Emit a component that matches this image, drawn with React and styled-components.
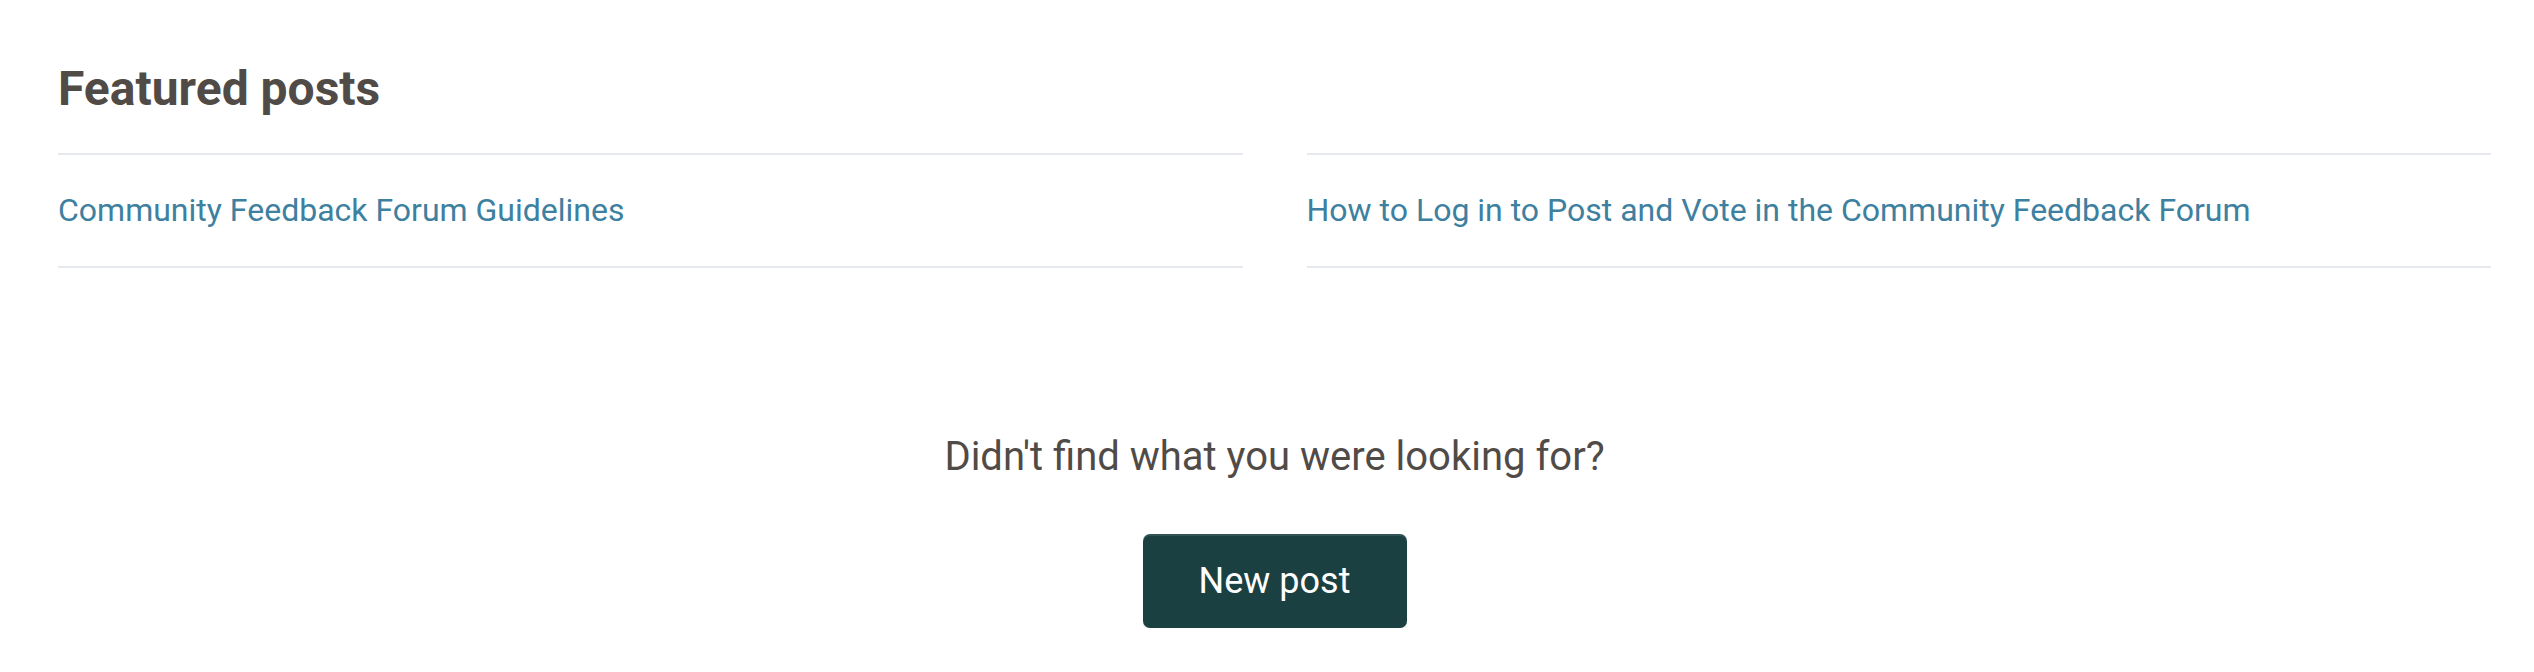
import React from 'react'
import styled, { createGlobalStyle } from 'styled-components'

const GlobalStyle = createGlobalStyle`
    body {
        margin: 0;
        background: #ffffff;
        font-family: Roboto, "Liberation Sans", sans-serif;
    }
`;

const featured = [
    'Community Feedback Forum Guidelines',
    'How to Log in to Post and Vote in the Community Feedback Forum',
];

function App() {
    return (
        <Page>
            <GlobalStyle />
            <Section>
                <Heading>Featured posts</Heading>
                <PostList>
                    {featured.map(title => (
                        <PostItem key={title}>
                            <a href="#">{title}</a>
                        </PostItem>
                    ))}
                </PostList>
            </Section>
            <Footer>
                <Question>Didn't find what you were looking for?</Question>
                <NewPostButton>New post</NewPostButton>
            </Footer>
        </Page>
    )
}

const Page = styled.div`
    padding: 0 43px 0 58px;
`;

const Section = styled.section`
    padding-top: 59px;
`;

const Heading = styled.h2`
    margin: 0 0 34px;
    font-size: 48px;
    line-height: 60px;
    font-weight: 700;
    color: #514b47;
`;

const PostList = styled.ul`
    list-style: none;
    margin: 0;
    padding: 0;
    display: grid;
    grid-template-columns: 1fr 1fr;
    column-gap: 64px;
`;

const PostItem = styled.li`
    border-top: 2px solid #e6e9ed;
    border-bottom: 2px solid #e6e9ed;
    padding: 32px 0;
    a {
        font-size: 32px;
        line-height: 47px;
        color: #3d80a0;
        text-decoration: none;
    }
`;

const Footer = styled.div`
    display: flex;
    flex-direction: column;
    align-items: center;
    padding-top: 160px;
`;

const Question = styled.p`
    margin: 0 0 48px;
    font-size: 40px;
    line-height: 58px;
    color: #514b47;
`;

const NewPostButton = styled.button`
    width: 264px;
    height: 94px;
    border: none;
    border-radius: 7px;
    background: #1b4042;
    color: #ffffff;
    font-family: Roboto, "Liberation Sans", sans-serif;
    font-size: 36px;
    cursor: pointer;
    box-shadow: inset 0 2px 0 rgba(255, 255, 255, 0.1), 0 3px 2px rgba(0, 0, 0, 0.06);
`;

export default App
